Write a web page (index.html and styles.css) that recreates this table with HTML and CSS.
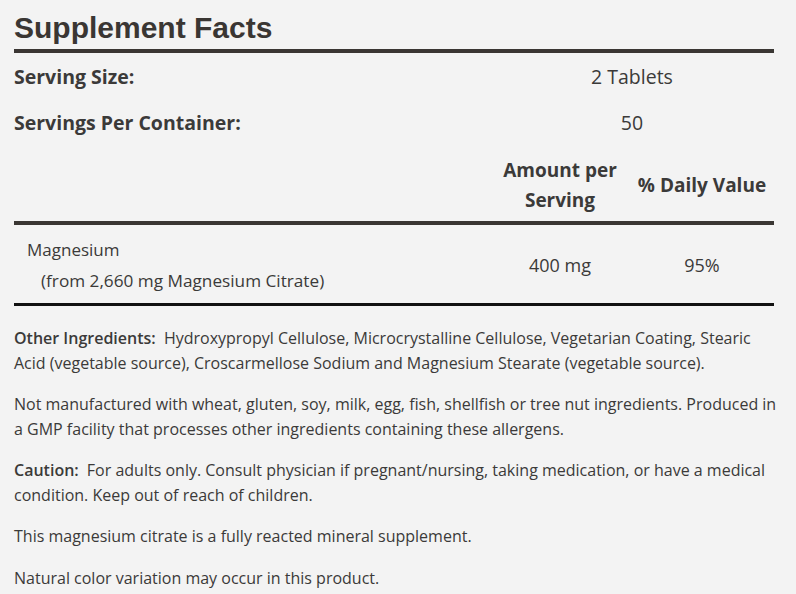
FILE: index.html
```html
<!DOCTYPE html>
<html>
<head>
<meta charset="utf-8">
<link rel="stylesheet" href="styles.css">
</head>
<body>
<div class="page">
  <h1 class="title">Supplement Facts</h1>
  <table class="facts">
    <colgroup>
      <col class="c-label">
      <col class="c-amt">
      <col class="c-dv">
    </colgroup>
    <tr class="serv">
      <th class="lbl">Serving Size:</th>
      <td class="val" colspan="2">2 Tablets</td>
    </tr>
    <tr class="serv">
      <th class="lbl">Servings Per Container:</th>
      <td class="val" colspan="2">50</td>
    </tr>
    <tr class="head">
      <th></th>
      <th class="hc">Amount per<br>Serving</th>
      <th class="hc">% Daily Value</th>
    </tr>
    <tr class="nut">
      <td class="name">Magnesium<div class="sub">(from 2,660 mg Magnesium Citrate)</div></td>
      <td class="num">400 mg</td>
      <td class="num">95%</td>
    </tr>
  </table>
  <div class="notes">
    <p class="para"><b class="key">Other Ingredients:</b> Hydroxypropyl Cellulose, Microcrystalline Cellulose, Vegetarian Coating, Stearic Acid (vegetable source), Croscarmellose Sodium and Magnesium Stearate (vegetable source).</p>
    <p class="para">Not manufactured with wheat, gluten, soy, milk, egg, fish, shellfish or tree nut ingredients. Produced in a GMP facility that processes other ingredients containing these allergens.</p>
    <p class="para"><b class="key">Caution:</b> For adults only. Consult physician if pregnant/nursing, taking medication, or have a medical condition. Keep out of reach of children.</p>
    <p class="para">This magnesium citrate is a fully reacted mineral supplement.</p>
    <p class="para">Natural color variation may occur in this product.</p>
  </div>
</div>
</body>
</html>
```
FILE: styles.css
```css
html, body {
  margin: 0;
  padding: 0;
  background: #f3f3f3;
}
.page {
  width: 760px;
  padding: 0 22px 0 14px;
  font-family: "Open Sans", "Liberation Sans", sans-serif;
  color: #3b3a39;
}
.title {
  margin: 0;
  padding-top: 9px;
  font-family: "Liberation Sans", Arial, sans-serif;
  font-size: 30px;
  font-weight: bold;
  line-height: 37px;
  color: #3a3633;
  border-bottom: 4px solid #3a3633;
  padding-bottom: 3px;
}
.facts {
  width: 760px;
  border-collapse: collapse;
}
.c-label { width: 476px; }
.c-amt { width: 140px; }
.c-dv { width: 144px; }
.facts th, .facts td {
  padding: 0;
}
.serv th, .serv td {
  height: 46px;
  font-size: 19.5px;
}
.lbl {
  text-align: left;
  font-weight: bold;
}
.val {
  text-align: center;
}
.head th {
  font-size: 19px;
  font-weight: bold;
  line-height: 30px;
  padding-top: 10px;
  padding-bottom: 6px;
  border-bottom: 4px solid #3a3633;
  text-align: center;
}
.nut td {
  border-bottom: 3px solid #111;
  padding-top: 9px;
  padding-bottom: 7px;
}
.name {
  padding-left: 13px !important;
  font-size: 17px;
  line-height: 31px;
}
.sub {
  padding-left: 14px;
  font-size: 17.2px;
}
.num {
  text-align: center;
  font-size: 18px;
}
.notes {
  width: 768px;
  padding-top: 20px;
}
.para {
  margin: 0 0 17px 0;
  font-size: 16px;
  line-height: 24.5px;
}
.key {
  font-weight: 600;
  margin-right: 4px;
}
```
